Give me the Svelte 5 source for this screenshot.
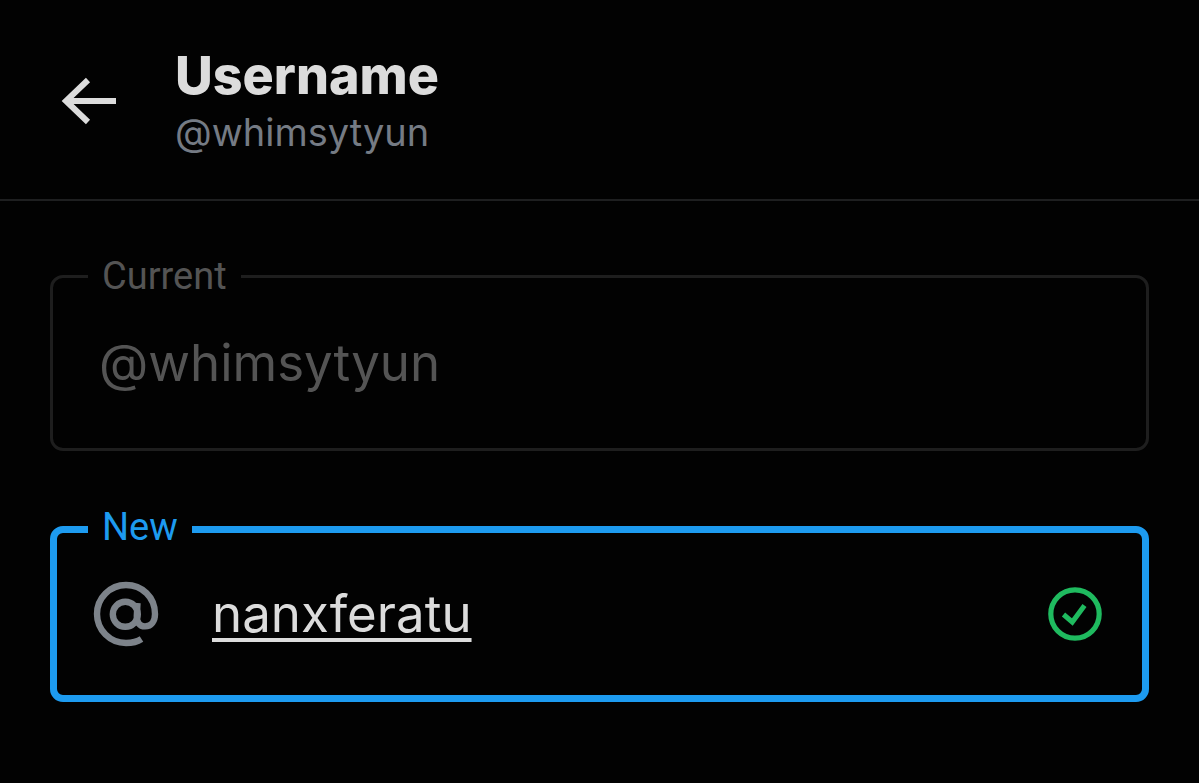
<script>
  let current = $state('@whimsytyun');
  let username = $state('nanxferatu');
</script>

<header class="header">
  <button class="back" type="button" aria-label="Back">
    <svg viewBox="0 0 56 48" fill="none" stroke="currentColor" stroke-width="6">
      <path d="M27 3 L5 24 L27 45" />
      <path d="M5 24 H55" />
    </svg>
  </button>
  <div>
    <h1 class="title">Username</h1>
    <p class="handle">{current}</p>
  </div>
</header>

<main class="form">
  <div class="field field--disabled">
    <label class="field-label" for="current">Current</label>
    <input class="field-input" id="current" type="text" value={current} disabled />
  </div>

  <div class="field field--active">
    <label class="field-label" for="new">New</label>
    <svg class="at" viewBox="0 0 66 66" fill="none" stroke="currentColor" stroke-width="6.4">
      <circle cx="32.3" cy="33.3" r="12.5" />
      <path d="M44.500 22 L43.800 35 C43.5 41 46.5 45.4 52 45.4 C58.5 45.4 62 40 62 33 C62 16 49 4 33 4 C17 4 4 17 4 33 C4 49 17 62 33 62 C39 62 44 61 48.5 58" />
    </svg>
    <input
      class="field-input field-input--new"
      id="new"
      type="text"
      autocomplete="off"
      spellcheck="false"
      bind:value={username}
    />
    <svg class="valid" viewBox="0 0 54 54" fill="none" stroke="currentColor">
      <circle cx="27" cy="27" r="24.2" stroke-width="5.2" />
      <path d="M15.5 27.5 L24.3 35 L36.500 18.500" stroke-width="5" />
    </svg>
  </div>
</main>

<style>
  :global(body) {
    background-color: #020202;
    font-family: Inter, 'Liberation Sans', sans-serif;
  }

  .header {
    display: flex;
    align-items: center;
    gap: 58px;
    padding: 45px 61px 42px;
    border-bottom: 2px solid #1e1f20;
  }

  .back {
    display: flex;
    padding: 0;
    border: none;
    background: none;
    color: #dcdcdc;
    cursor: pointer;
  }

  .back svg {
    width: 56px;
    height: 48px;
  }

  .title {
    margin: 0;
    font-size: 52px;
    line-height: 62px;
    font-weight: 800;
    color: #dcdcdc;
  }

  .handle {
    margin: 0;
    font-size: 38px;
    line-height: 50px;
    color: #757b84;
  }

  /* FIELDS */
  .form {
    display: flex;
    flex-direction: column;
    gap: 75px;
    padding: 74px 50px;
  }

  .field {
    position: relative;
    box-sizing: border-box;
    min-height: 176px;
    display: flex;
    align-items: center;
    border-radius: 13px;
  }

  .field--disabled {
    border: 3px solid #1e1e1e;
    padding: 0 46px;
    color: #545454;
  }

  .field--active {
    border: 7px solid #1d9bf0;
    padding: 0 40px 0 36px;
    color: #1d9bf0;
  }

  /* sits over the border and cuts the notch */
  .field-label {
    position: absolute;
    top: -2px;
    left: 35px;
    transform: translateY(-50%);
    padding: 0 14px;
    background-color: #020202;
    font-family: Roboto, 'Liberation Sans', sans-serif;
    font-size: 38px;
    line-height: 44px;
  }

  .field--active .field-label {
    top: -6px;
    left: 31px;
  }

  .field-input {
    flex: 1;
    min-width: 0;
    padding: 0;
    border: none;
    outline: none;
    background: none;
    font-family: inherit;
    font-size: 51px;
    line-height: 68px;
    color: #545454;
  }

  .field-input--new {
    margin: 0 53px;
    color: #dcdcdc;
    text-decoration: underline;
    text-decoration-thickness: 4px;
    text-underline-offset: 6px;
    text-decoration-skip-ink: none;
  }

  .at {
    width: 66px;
    height: 66px;
    color: #7d838a;
  }

  .valid {
    width: 54px;
    height: 54px;
    color: #1fba5f;
  }
</style>
